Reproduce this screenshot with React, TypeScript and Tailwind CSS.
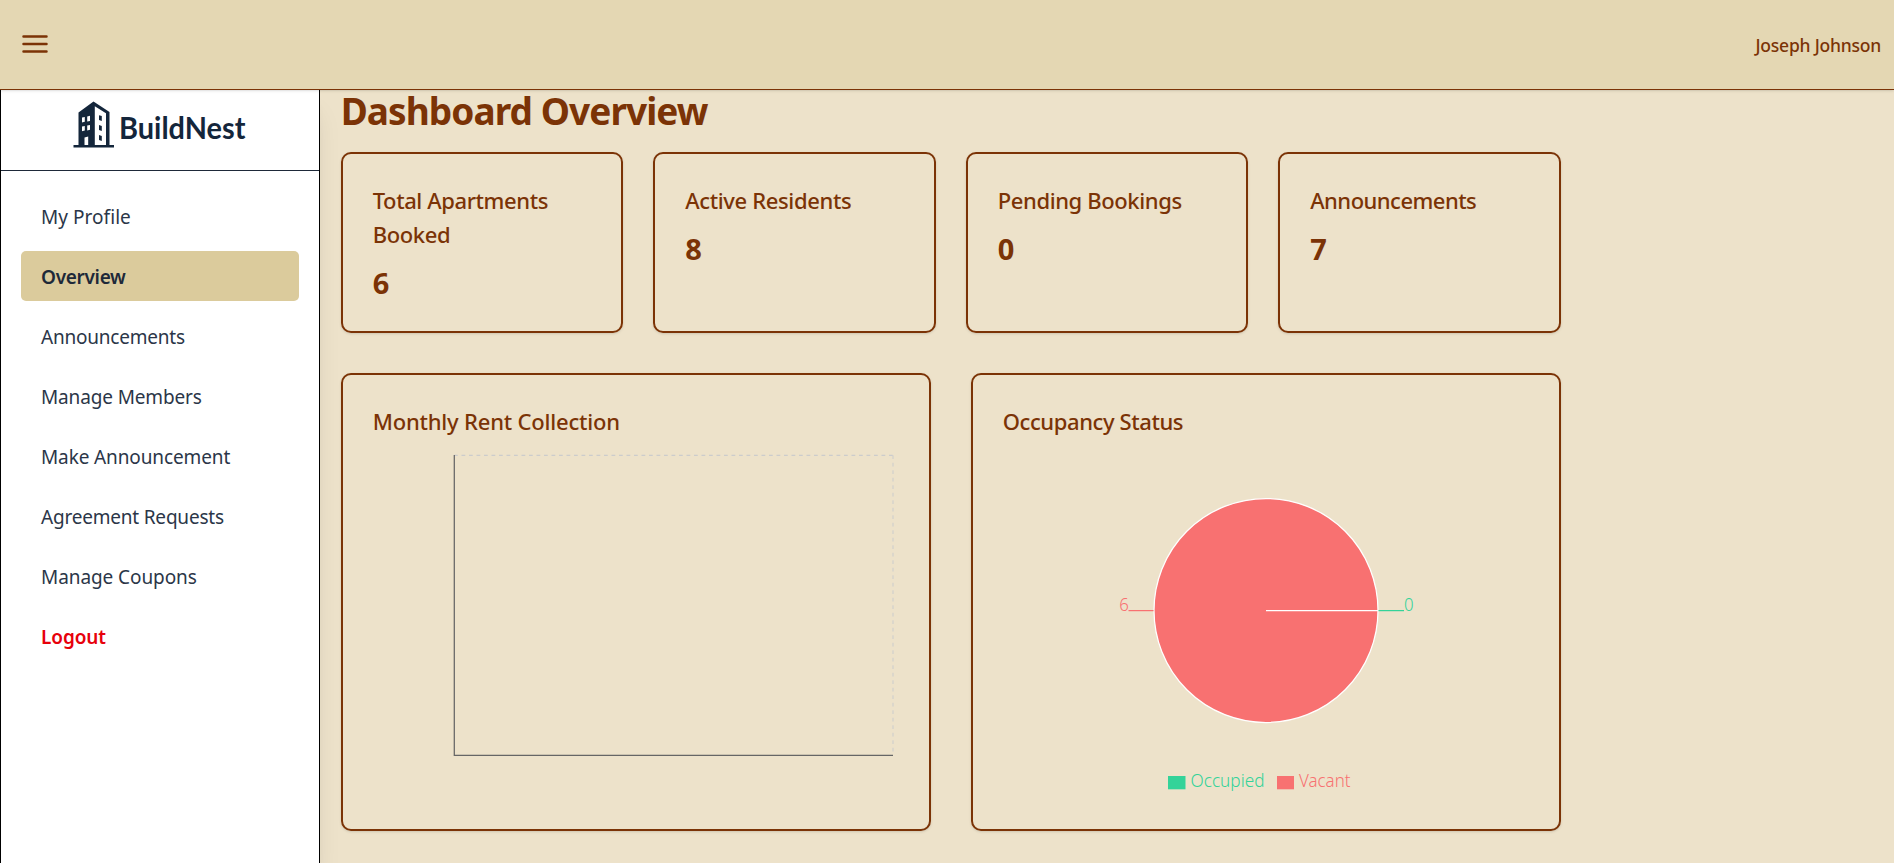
import clsx from "clsx";

const NAV = [
  { label: "My Profile", tracking: "tracking-[0.05px]" },
  { label: "Overview", tracking: "tracking-[-0.3px]", active: true },
  { label: "Announcements", tracking: "tracking-[-0.22px]" },
  { label: "Manage Members", tracking: "tracking-[-0.14px]" },
  { label: "Make Announcement", tracking: "tracking-[-0.12px]" },
  { label: "Agreement Requests", tracking: "tracking-[-0.2px]" },
  { label: "Manage Coupons", tracking: "tracking-[-0.08px]" },
  { label: "Logout", tracking: "tracking-[-0.1px]", danger: true },
];

const STATS = [
  { label: "Total Apartments Booked", value: 6, tracking: "tracking-[-0.4px]" },
  { label: "Active Residents", value: 8, tracking: "tracking-[-0.36px]" },
  { label: "Pending Bookings", value: 0, tracking: "tracking-[-0.38px]" },
  { label: "Announcements", value: 7, tracking: "tracking-[-0.52px]" },
];

function Header() {
  return (
    <header className="relative z-20 flex h-[90px] shrink-0 items-center justify-between border-b border-[#7b3306] bg-[#e4d7b3] pr-[13px] pl-5 shadow-sm">
      <button aria-label="Toggle menu" className="h-[30px] w-[30px]">
        <svg viewBox="0 0 30 30" className="block h-[30px] w-[30px] text-[#7b3306]" fill="none" stroke="currentColor" strokeWidth="2.5" strokeLinecap="round">
          <path d="M3.5 6.5H26.500M3.5 14H26.500M3.5 21.500H26.500" />
        </svg>
      </button>
      <span className="pt-[2px] text-[17.5px] font-medium tracking-[-0.22px]">Joseph Johnson</span>
    </header>
  );
}

function Logo() {
  return (
    <svg viewBox="0 0 180 50" className="block h-[50px] w-[180px]" fill="#14263b">
      <path fillRule="evenodd" d="M5.5 12.5 20.5 1.5 36.5 12V46H5.5ZM21.8 6.2V45H33V13.3ZM9 17.6V22.4L11.8 21.7V16.9ZM14.2 16.5V21.6L17 20.9V15.8ZM9 26.6V31.2L11.8 30.6V26ZM14.2 25.6V30.5L17 29.8V24.9ZM11.5 37.5V45H15.2V36.5Z" />
      <path d="M26 15.2 28.8 16V21L26 20ZM26 25 28.800 26V31L26 30ZM26 35 28.800 36V41L26 40Z" />
      <path d="M.5 45H41V47.500H.5Z" />
      <text x="46" y="38.500" fontFamily="Lato, sans-serif" fontSize="29.5" fontWeight="700" textLength="126.5" lengthAdjust="spacingAndGlyphs">BuildNest</text>
    </svg>
  );
}

function Sidebar() {
  return (
    <aside className="relative z-10 w-[320px] shrink-0 border-x border-black bg-white shadow-xl">
      <div className="flex h-[81px] justify-center border-b border-[#1e2939] pt-[10px] pl-[6px]">
        <Logo />
      </div>
      <nav className="flex flex-col gap-[10px] p-5">
        {NAV.map((item) => (
          <a
            key={item.label}
            className={clsx(
              "flex h-[50px] items-center rounded-[5px] px-5 pt-[2px] text-[19px]",
              item.tracking,
              item.active && "bg-[#dbcb9c] font-semibold text-[#1e2939]",
              item.danger && "font-semibold text-[#e7000b]",
              !item.active && !item.danger && "text-[#2b3648]",
            )}
          >
            {item.label}
          </a>
        ))}
      </nav>
    </aside>
  );
}

function RentChart() {
  return (
    <svg viewBox="0 0 526 375" className="block h-[375px] w-[526px]" fill="none">
      <path d="M81 12.3H520" stroke="#ccc" strokeWidth="1.25" strokeDasharray="3.75 3.75" />
      <path d="M520 12.3V312" stroke="#ccc" strokeOpacity=".8" strokeWidth="1.25" strokeDasharray="3.75 3.75" />
      <path d="M81.3 12V312.3H520" stroke="#666" strokeWidth="1.25" />
    </svg>
  );
}

function OccupancyChart() {
  return (
    <svg viewBox="0 0 526 375" className="block h-[375px] w-[526px] overflow-visible" fontSize="18" fontWeight="300">
      <circle cx="263" cy="167.5" r="112" fill="#f87171" stroke="#fff" strokeWidth="1.25" />
      <path d="M263 167.6H375" stroke="#fff" strokeWidth="1.25" />
      <path d="M375.5 167.6H401" stroke="#34d399" strokeWidth="1.25" />
      <path d="M125.5 167.6H150.5" stroke="#f87171" strokeWidth="1.25" />
      <text x="116.2" y="168" fill="#f87171" textLength="9.6" lengthAdjust="spacingAndGlyphs">6</text>
      <text x="401" y="168" fill="#34d399" textLength="9.6" lengthAdjust="spacingAndGlyphs">0</text>
      <rect x="165" y="333" width="17.5" height="13.3" fill="#34d399" />
      <text x="187.5" y="344" fill="#34d399" textLength="74" lengthAdjust="spacingAndGlyphs">Occupied</text>
      <rect x="274" y="333" width="17" height="13.3" fill="#f87171" />
      <text x="296" y="344" fill="#f87171" textLength="51.5" lengthAdjust="spacingAndGlyphs">Vacant</text>
    </svg>
  );
}

export default function App() {
  return (
    <div className="flex h-[863px] flex-col overflow-hidden bg-[#ede2ca] font-['Noto_Sans',sans-serif] text-[#7b3306]">
      <Header />
      <div className="flex min-h-0 flex-1">
        <Sidebar />
        <main className="flex-1 px-[20.7px]">
          <div className="w-[1220px]">
            <h1 className="mt-[-4px] h-[66px] text-[37px] leading-[50px] font-bold tracking-[-0.93px]">Dashboard Overview</h1>
            <section className="grid grid-cols-4 gap-[30px]">
              {STATS.map((s) => (
                <div key={s.label} className="h-[181px] rounded-[10px] border-2 border-[#7b3306] px-[30px] pt-[29px] shadow-sm">
                  <h2 className={clsx("text-[22px] leading-[34px] font-medium", s.tracking)}>{s.label}</h2>
                  <p className="mt-[12px] text-[29px] leading-[40px] font-bold">{s.value}</p>
                </div>
              ))}
            </section>
            <section className="mt-10 grid grid-cols-2 gap-10">
              <div className="h-[458px] rounded-[10px] border-2 border-[#7b3306] px-[30px] pt-[29px] shadow-sm">
                <h2 className="mb-[5px] text-[22px] leading-[34px] font-medium tracking-[-0.2px]">Monthly Rent Collection</h2>
                <RentChart />
              </div>
              <div className="h-[458px] rounded-[10px] border-2 border-[#7b3306] px-[30px] pt-[29px] shadow-sm">
                <h2 className="mb-[5px] text-[22px] leading-[34px] font-medium tracking-[-0.4px]">Occupancy Status</h2>
                <OccupancyChart />
              </div>
            </section>
          </div>
        </main>
      </div>
    </div>
  );
}
